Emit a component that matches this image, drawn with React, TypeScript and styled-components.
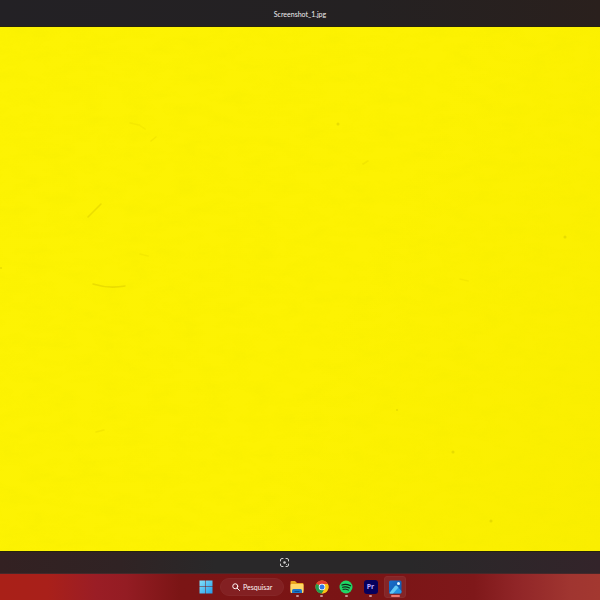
import React from "react";
import styled, { createGlobalStyle } from "styled-components";

const GlobalStyle = createGlobalStyle`
  * { box-sizing: border-box; }
  body { margin: 0; font-family: Lato, "Open Sans", sans-serif; }
`;

const Desktop = styled.div`
  display: flex;
  flex-direction: column;
  height: 100vh;
  background: #7c1516;
`;

const TitleBar = styled.header`
  display: flex;
  flex: none;
  align-items: center;
  justify-content: center;
  height: 27px;
  padding-top: 2px;
  background: linear-gradient(90deg, #232125 0%, #242122 60%, #2a201d 100%);
  border-bottom: 1px solid #28250a;
`;

const FileName = styled.h1`
  margin: 0;
  color: #f0eeef;
  font-size: 7px;
  font-weight: 400;
  line-height: 10px;
`;

const Viewer = styled.main`
  flex: 1;
  min-height: 0;
  background: linear-gradient(115deg, #fdf303 0%, #fdf202 55%, #faee00 100%);
`;

const Canvas = styled.svg`
  display: block;
  width: 100%;
  height: 100%;
`;

const ViewerTools = styled.div`
  display: flex;
  flex: none;
  align-items: center;
  justify-content: center;
  height: 23px;
  padding-right: 31px;
  border-top: 1px solid #28250a;
  border-bottom: 1px solid #46282a;
  background: linear-gradient(90deg, #332122 0%, #302324 20%, #292829 36%, #292829 68%, #33242a 100%);
`;

const ToolButton = styled.button`
  display: flex;
  padding: 0;
  border: 0;
  background: none;
  color: #d0cfd0;
`;

const Taskbar = styled.nav`
  display: flex;
  flex: none;
  align-items: center;
  justify-content: center;
  gap: 2px;
  height: 26px;
  background: linear-gradient(90deg, #a92018 0%, #a9201a 8%, #9a1d25 16%, #941c23 21%, #7b1515 30%, #7a1415 60%, #7f181a 79%, #902527 86%, #a03530 95%, #a33830 100%);
`;

const StartButton = styled.button`
  display: flex;
  justify-content: center;
  width: 24px;
  padding: 0;
  border: 0;
  background: none;
`;

const SearchBox = styled.label`
  display: flex;
  align-items: center;
  gap: 3px;
  width: 64px;
  height: 18px;
  padding-left: 11px;
  border: 1px solid #862728;
  border-radius: 9px;
  background: #832022;
  color: #fff5f5;

  svg { flex: none; }
`;

const SearchInput = styled.input`
  width: 38px;
  min-width: 0;
  padding: 0;
  border: 0;
  outline: 0;
  background: none;
  color: #fff5f5;
  font-family: inherit;
  font-size: 7px;
  line-height: 10px;

  &::placeholder { color: #fff5f5; opacity: 1; }
`;

const Apps = styled.div`
  display: flex;
  justify-content: space-between;
  width: 120px;
`;

const AppButton = styled.button<{ $active?: boolean }>`
  display: flex;
  flex-direction: column;
  align-items: center;
  justify-content: space-between;
  width: 22px;
  height: 22px;
  padding: 3px 0 0;
  border: 1px solid ${({ $active }) => ($active ? "#892c2d" : "transparent")};
  border-radius: 3px;
  background: ${({ $active }) => ($active ? "#852527" : "none")};
`;

const Indicator = styled.span<{ $active?: boolean }>`
  width: ${({ $active }) => ($active ? 9 : 3)}px;
  height: 2px;
  border-radius: 1px;
  background: ${({ $active }) => ($active ? "#f0776c" : "#c99292")};
`;

const FolderIcon = () => (
  <svg width="14" height="14" viewBox="0 0 28 28" aria-hidden="true">
    <path d="M1 4q0-2 2-2h7l4 4h11q2 0 2 2v13H1z" fill="#e9a51c" />
    <rect x="1" y="8" width="26" height="18" rx="2" fill="#ffd768" />
    <path d="M4 26v-5q0-3 3-3h14q3 0 3 3v5z" fill="#1c77c9" />
    <path d="M9 23h10" stroke="#0b4d91" strokeWidth="2" />
  </svg>
);

const ChromeIcon = () => (
  <svg width="14" height="14" viewBox="0 0 28 28" aria-hidden="true">
    <circle cx="14" cy="14" r="13" fill="#fbc116" />
    <path d="M14 14 2.7 7.5A13 13 0 0 1 25.3 7.5z" fill="#e33b2e" />
    <path d="M2.7 7.5A13 13 0 0 0 14 27l5.6-9.8L14 14z" fill="#229b50" />
    <path d="M14 8h11.6A13 13 0 0 1 14 27l5.4-10z" fill="#fbc116" />
    <circle cx="14" cy="14" r="6.5" fill="#fff" />
    <circle cx="14" cy="14" r="5" fill="#3478e5" />
  </svg>
);

const SpotifyIcon = () => (
  <svg width="14" height="14" viewBox="0 0 28 28" aria-hidden="true">
    <circle cx="14" cy="14" r="13" fill="#20d565" />
    <g fill="none" stroke="#10231a" strokeLinecap="round">
      <path d="M6 10q8-3 17 1.500" strokeWidth="2.600" />
      <path d="M7 14.500q7-2 14 1.500" strokeWidth="2.300" />
      <path d="M8 18.500q6-1.500 11 1.500" strokeWidth="2" />
    </g>
  </svg>
);

const PremiereBadge = styled.span`
  display: flex;
  align-items: center;
  justify-content: center;
  width: 14px;
  height: 14px;
  border-radius: 3px;
  background: #07005c;
  color: #b9a9ff;
  font-family: "Open Sans", sans-serif;
  font-size: 7px;
  font-weight: 700;
  line-height: 14px;
`;

const PhotosIcon = () => (
  <svg width="14" height="14" viewBox="0 0 28 28" aria-hidden="true">
    <defs>
      <linearGradient id="photo-sky" x2="1" y2="1">
        <stop stopColor="#1970cb" />
        <stop offset="1" stopColor="#1355aa" />
      </linearGradient>
    </defs>
    <rect x="2" y="1" width="25" height="26" rx="3" fill="url(#photo-sky)" />
    <path d="M3 26 14 12q2-2 4 0l9 10v2q0 3-3 3H5q-1 0-2-1z" fill="#2494e2" />
    <path d="M3 26 14 12q2-2 4 0l3 3L10 27H5q-1 0-2-1z" fill="#62c8f5" />
    <circle cx="21" cy="7" r="3" fill="#e6f7ff" />
  </svg>
);

const apps = [
  { name: "Explorador de Arquivos", icon: <FolderIcon /> },
  { name: "Google Chrome", icon: <ChromeIcon /> },
  { name: "Spotify", icon: <SpotifyIcon /> },
  { name: "Adobe Premiere Pro", icon: <PremiereBadge>Pr</PremiereBadge> },
  { name: "Fotos", icon: <PhotosIcon />, active: true },
];

export default function App() {
  return (
    <>
      <GlobalStyle />
      <Desktop>
        <TitleBar>
          <FileName>Screenshot_1.jpg</FileName>
        </TitleBar>
        <Viewer>
          <Canvas viewBox="0 0 600 524" preserveAspectRatio="none" role="img" aria-label="Screenshot_1.jpg">
            <defs>
              <filter id="paper" x="0" y="0" width="100%" height="100%">
                <feTurbulence type="fractalNoise" baseFrequency="0.040 0.090" numOctaves="4" seed="8" />
                <feColorMatrix values="0 0 0 0 0.900  0 0 0 0 0.840  0 0 0 0 0  1.200 0 0 0 -0.500" />
              </filter>
            </defs>
            <rect width="600" height="524" filter="url(#paper)" opacity="0.5" />
            <g fill="none" stroke="#dfd000" strokeWidth="1.500" strokeLinecap="round" opacity="0.6">
              <path d="m88 190 13-13" />
              <path d="M93 257q16 5 32 2" />
              <path d="m130 96 9 2 6 4" opacity="0.4" />
              <path d="m151 114 5-4" opacity="0.5" />
              <path d="m140 227 8 2" opacity="0.4" />
              <path d="m96 405 8-2" opacity="0.5" />
              <path d="m363 137 5-3" opacity="0.5" />
              <path d="m460 252 8 2" opacity="0.4" />
            </g>
            <g fill="#d4c700" opacity="0.5">
              <circle cx="338" cy="97" r="1.500" />
              <circle cx="565" cy="210" r="1.500" />
              <circle cx="453" cy="425" r="1.500" />
              <circle cx="491" cy="494" r="1.500" />
              <circle cx="397" cy="383" r="1" />
              <circle cx="1" cy="241" r="1" />
            </g>
          </Canvas>
        </Viewer>
        <ViewerTools>
          <ToolButton type="button" aria-label="Pesquisa visual">
            <svg width="9" height="9" viewBox="0 0 18 18" fill="none" stroke="currentColor" strokeWidth="2" strokeLinecap="round" aria-hidden="true">
              <path d="M1 6V4q0-3 3-3h2M12 1h2q3 0 3 3v2M17 12v2q0 3-3 3h-2M6 17H4q-3 0-3-3v-2" />
              <circle cx="9" cy="9" r="2.500" fill="currentColor" stroke="none" />
              <circle cx="13" cy="13" r="1" fill="currentColor" stroke="none" />
            </svg>
          </ToolButton>
        </ViewerTools>
        <Taskbar aria-label="Barra de tarefas">
          <StartButton type="button" aria-label="Iniciar">
            <svg width="14" height="14" viewBox="0 0 14 14" aria-hidden="true">
              <defs>
                <linearGradient id="start-blue" x2="1" y2="1">
                  <stop stopColor="#83e2fb" />
                  <stop offset="1" stopColor="#249ce8" />
                </linearGradient>
              </defs>
              <path d="M0.500 0.500h6v6h-6zM7 0.500h6.500v6h-6.500zM0.500 7h6v6.500h-6zM7 7h6.500v6.500h-6.500z" fill="url(#start-blue)" />
            </svg>
          </StartButton>
          <SearchBox>
            <svg width="8" height="8" viewBox="0 0 16 16" fill="none" stroke="currentColor" strokeWidth="2" strokeLinecap="round" aria-hidden="true">
              <circle cx="6.500" cy="6.500" r="5" />
              <path d="m10.500 10.500 4.500 4.500" />
            </svg>
            <SearchInput type="text" placeholder="Pesquisar" aria-label="Pesquisar" />
          </SearchBox>
          <Apps>
            {apps.map(({ name, icon, active }) => (
              <AppButton key={name} type="button" aria-label={name} $active={active}>
                {icon}
                <Indicator $active={active} />
              </AppButton>
            ))}
          </Apps>
        </Taskbar>
      </Desktop>
    </>
  );
}
